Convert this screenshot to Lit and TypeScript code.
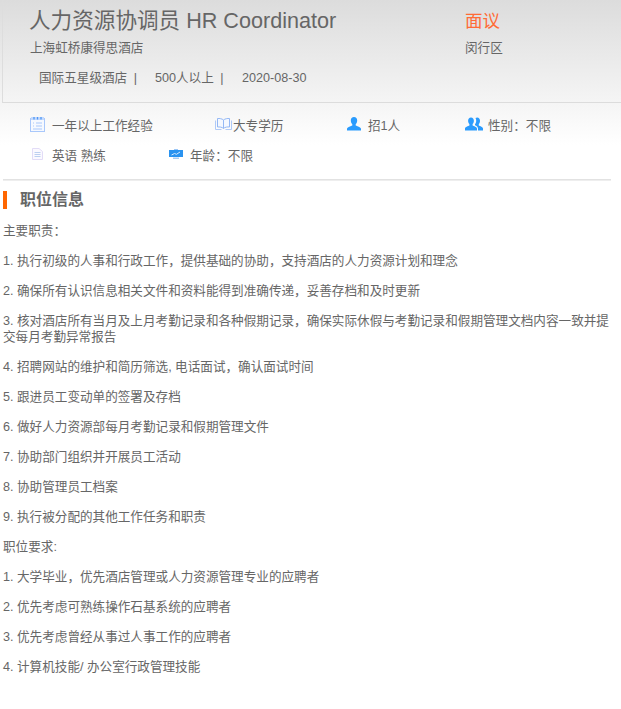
import { LitElement, html, css, svg } from "lit";
import { customElement } from "lit/decorators.js";

const calendar = svg`<svg width="15" height="15" viewBox="0 0 15 15"><rect x=".5" y="1.500" width="14" height="13" fill="#f6f9ff" stroke="#a9c8fb"/><rect x="1" y="0" width="13" height="3" fill="#c4dafd"/><path d="M4 0v2.500M7.500 0v2.500M11 0v2.500" stroke="#4f97f5" stroke-width="1.300"/><path d="M3 6h1M6 6h6M3 9h1M6 9h6M3 12h9" stroke="#a9c8fb"/></svg>`;
const book = svg`<svg width="17" height="12" viewBox="0 0 17 12"><path d="M8.500 2C7 .7 4.500.3 2.500.5v8.500c2-.2 4.500 0 6 1.500 1.500-1.500 4-1.700 6-1.500V.5c-2-.2-4.500.2-6 1.500zM8.500 2v8.500" fill="#f4f8ff" stroke="#94b8f5"/><path d="M.5 2.500v9h6M16.500 2.500v9h-6" fill="none" stroke="#b0caf8"/></svg>`;
const person = svg`<svg width="14" height="14" viewBox="0 0 14 14"><path d="M7 0c2 0 3.200 1.500 3.200 3.500 0 1.500-.7 3-1.500 3.800v1.200c1.300.8 5.300 1.500 5.300 3.500v1.500H0V12c0-2 4-2.700 5.300-3.500V7.300C4.500 6.500 3.800 5 3.800 3.500 3.800 1.500 5 0 7 0z" fill="#2a9bfd"/></svg>`;
const people = svg`<svg width="18" height="14" viewBox="0 0 18 14"><path d="M6 .5c1.800 0 2.900 1.400 2.900 3.200 0 1.400-.6 2.600-1.300 3.300v1.400c1.200.7 4.400 1.400 4.400 3.200V13.500H0v-1.900c0-1.800 3.200-2.500 4.400-3.200V7C3.700 6.300 3.100 5.100 3.100 3.700 3.100 1.900 4.200.5 6 .5z" fill="#2a9bfd"/><path d="M13 13.500h5v-1.900c0-1.700-3-2.300-4.200-3V7c.7-.7 1.200-1.900 1.200-3.300C15 1.900 13.900.5 12.200.5c-.7 0-1.200.2-1.700.5.500.8.700 1.700.7 2.700 0 1.300-.5 2.700-1.200 3.500v1.100c1.500.8 3 1.500 3 3.500z" fill="#2a9bfd"/></svg>`;
const doc = svg`<svg width="11" height="12" viewBox="0 0 11 12"><path d="M.5.500h6.500l3.500 3v8H.5z" fill="#fbf9ff" stroke="#e2dcf7"/><path d="M2.500 4.500h6M2.500 6.500h6M2.500 8.500h6" stroke="#bcd0f0"/></svg>`;
const board = svg`<svg width="14" height="11" viewBox="0 0 14 11"><rect x="5" y="0" width="4" height="1.500" fill="#9cc7f7"/><rect x="0" y="1" width="14" height="7" fill="#2a93f0"/><path d="M2.500 6l3-1.500 2 .8L11 3" stroke="#d5e9fd" fill="none"/><path d="M4 8.500h6V10H4z" fill="#a9cdf5"/></svg>`;

const duties = [
  "1. 执行初级的人事和行政工作，提供基础的协助，支持酒店的人力资源计划和理念",
  "2. 确保所有认识信息相关文件和资料能得到准确传递，妥善存档和及时更新",
  "3. 核对酒店所有当月及上月考勤记录和各种假期记录，确保实际休假与考勤记录和假期管理文档内容一致并提交每月考勤异常报告",
  "4. 招聘网站的维护和简历筛选, 电话面试，确认面试时间",
  "5. 跟进员工变动单的签署及存档",
  "6. 做好人力资源部每月考勤记录和假期管理文件",
  "7. 协助部门组织并开展员工活动",
  "8. 协助管理员工档案",
  "9. 执行被分配的其他工作任务和职责",
];
const reqs = [
  "1. 大学毕业，优先酒店管理或人力资源管理专业的应聘者",
  "2. 优先考虑可熟练操作石基系统的应聘者",
  "3. 优先考虑曾经从事过人事工作的应聘者",
  "4. 计算机技能/ 办公室行政管理技能",
];

@customElement("app-root")
export class AppRoot extends LitElement {
  static styles = css`
    :host {
      display: block;
      width: 621px;
      height: 709px;
      overflow: hidden;
      background: #fff;
      color: #666;
      font-family: "Liberation Sans", "Noto Sans CJK SC", sans-serif;
      font-size: 12.6px;
    }
    .top {
      background: linear-gradient(#dcdcdc, #fff);
      height: 145px;
      padding-left: 2px;
    }
    .head {
      height: 103px;
      box-sizing: border-box;
      border-left: 1px solid #ddd;
      border-bottom: 1px solid #dcdcdc;
      display: flex;
    }
    .main { width: 435px; padding-left: 27px; }
    .title { font-size: 21.6px; line-height: 26px; margin: 8px 0 0 -1px; }
    .company { line-height: 18px; margin-top: 5px; }
    .meta { display: flex; margin-top: 12px; padding-left: 9px; line-height: 18px; }
    .meta span:nth-child(1) { width: 116px; }
    .meta span:nth-child(2) { width: 87px; }
    .sep { margin-left: 3px; }
    .side { display: flex; flex-direction: column; }
    .salary { color: #ff6b35; font-size: 17.5px; line-height: 26px; margin-top: 8px; }
    .area { line-height: 18px; margin-top: 5px; }
    .facts { display: flex; flex-wrap: wrap; padding-top: 11px; row-gap: 10px; }
    .fact { display: flex; align-items: center; height: 20px; }
    .fact i { display: flex; align-items: center; font-style: normal; }
    .f1 { width: 213px; padding-left: 28px; box-sizing: border-box; }
    .f1 i { width: 22px; }
    .f2 { width: 132px; }
    .f2 i { width: 18px; }
    .f3 { width: 118px; }
    .f3 i { width: 21px; }
    .f4 { width: 120px; }
    .f4 i { width: 23px; }
    .f5 { width: 167px; padding-left: 30px; box-sizing: border-box; }
    .f5 i { width: 20px; }
    .f6 i { width: 21px; }
    .rule { height: 1px; background: #e2e2e2; border-bottom: 1px solid #eee; margin: 34px 10px 0 3px; }
    .section { display: flex; align-items: center; margin: 9px 0 0 3px; height: 20px; }
    .section b { width: 4px; height: 18px; background: #ff6600; margin-right: 13px; }
    .section h2 { margin: 0; font-size: 16px; font-weight: 700; color: #666; line-height: 20px; }
    .body { padding: 13px 6px 0 3px; line-height: 16px; }
    p { margin: 0 0 14px; }
  `;

  render() {
    return html`
      <div class="top">
        <div class="head">
          <div class="main">
            <div class="title">人力资源协调员 HR Coordinator</div>
            <div class="company">上海虹桥康得思酒店</div>
            <div class="meta"><span>国际五星级酒店<span class="sep">&nbsp;|</span></span><span>500人以上<span class="sep">&nbsp;|</span></span><span>2020-08-30</span></div>
          </div>
          <div class="side">
            <div class="salary">面议</div>
            <div class="area">闵行区</div>
          </div>
        </div>
        <div class="facts">
          <div class="fact f1"><i>${calendar}</i>一年以上工作经验</div>
          <div class="fact f2"><i>${book}</i>大专学历</div>
          <div class="fact f3"><i>${person}</i>招1人</div>
          <div class="fact f4"><i>${people}</i>性别：不限</div>
          <div class="fact f5"><i>${doc}</i>英语 熟练</div>
          <div class="fact f6"><i>${board}</i>年龄：不限</div>
        </div>
      </div>
      <div class="rule"></div>
      <div class="section"><b></b><h2>职位信息</h2></div>
      <div class="body">
        <p>主要职责：</p>
        ${duties.map((d) => html`<p>${d}</p>`)}
        <p>职位要求:</p>
        ${reqs.map((d) => html`<p>${d}</p>`)}
      </div>
    `;
  }
}
